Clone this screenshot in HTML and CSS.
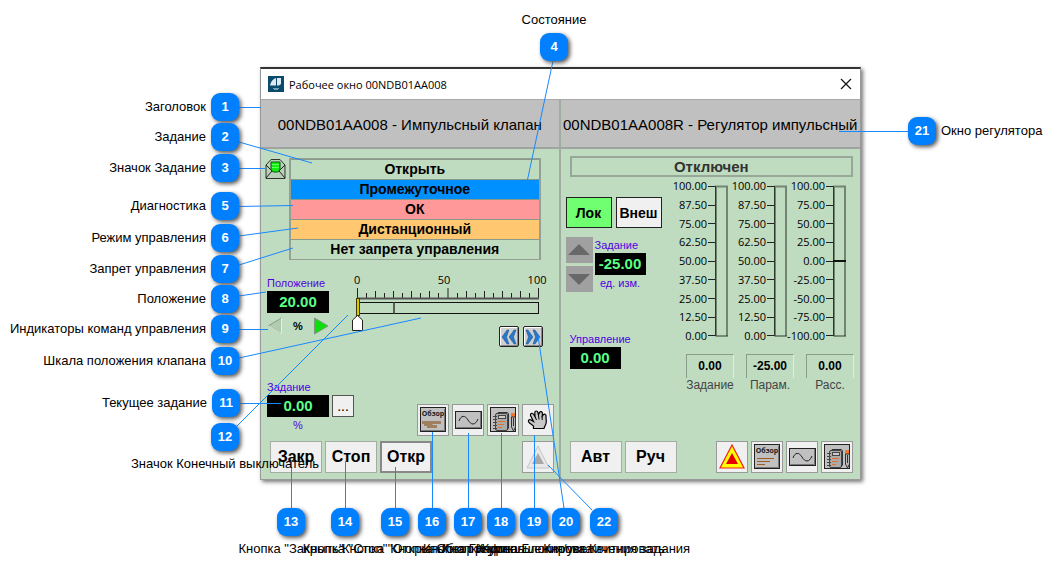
FILE: index.html
```html
<!DOCTYPE html>
<html lang="ru">
<head>
<meta charset="utf-8">
<title>Рабочее окно 00NDB01AA008</title>
<link rel="stylesheet" href="styles.css">
</head>
<body>
<svg class="defs" aria-hidden="true">
  <defs>
    <symbol id="i-overview" viewBox="0 0 28 28">
      <rect x="1.5" y="1.5" width="25" height="24" fill="#c0c0c0" stroke="#222"/>
      <path d="M2.500 24.500H25.500V3" fill="none" stroke="#777"/>
      <path d="M4 15.500H21M4 18.500H17M4 21.500H12" stroke="#a05a20"/>
      <text x="14" y="10" text-anchor="middle" class="icon-text">Обзор</text>
    </symbol>
    <symbol id="i-overview-hover" viewBox="0 0 28 28">
      <rect x="1.500" y="1.500" width="25" height="24" fill="#c0c0c0" stroke="#222"/>
      <path d="M2.500 24.500H25.500V3" fill="none" stroke="#777"/>
      <path d="M3 15H22V18H14L13 19H18V22H8V20H5V18H3Z" fill="#a08060"/>
      <text x="14" y="10" text-anchor="middle" class="icon-text">Обзор</text>
    </symbol>
    <symbol id="i-trend" viewBox="0 0 28 28">
      <rect x="1.500" y="5.500" width="26" height="17" fill="#c0c0c0" stroke="#222"/>
      <path d="M2.500 21.500H26.500V6" fill="none" stroke="#777"/>
      <path d="M5 15C7 9 11 9 14 14S21 20 24 13" fill="none" stroke="#222"/>
    </symbol>
    <symbol id="i-journal" viewBox="0 0 28 28">
      <rect x="1.500" y="1.500" width="25" height="24" fill="#c0c0c0" stroke="#222"/>
      <rect x="6.500" y="7.500" width="12" height="17" rx="1.500" fill="#aaa" stroke="#444"/>
      <path d="M8 7.500L9 6.500H18.500L19.500 8V22L18 24" fill="none" stroke="#333"/>
      <rect x="9.500" y="9.500" width="7" height="3" fill="#ccc" stroke="#444"/>
      <path d="M9 15.500H16M9 18.500H15M9 21.500H13" stroke="#e07030"/>
      <path d="M4 10.500H8M4 13.500H8M4 16.500H8M4 19.500H8M4 22.500H8" stroke="#444"/>
      <path d="M22 8H26M22 10H26" stroke="#f07828" stroke-width="2"/>
      <path d="M22.500 11V21L24.500 25L26.500 21V11ZM24.500 12V20" fill="#bbb" stroke="#333"/>
    </symbol>
    <symbol id="i-hand" viewBox="0 0 28 28">
      <path d="M9.500 22.500V20L5 16.500C3.500 14.500 5 13 7 14L9.500 15.500L6.500 9.500C6 7 8.500 6.500 9.700 8.500L11 10.500L10.800 6.500C11 4.500 13.500 4.500 13.900 6.500L14.500 9L15.500 6.500C16.500 4.800 18.500 5.500 18.400 7.500L18.200 10L19.500 8.500C21 7.500 22.500 9 22 11L22.300 16C22 19 20.500 20 20 22.500Z" fill="#c8c8c8" stroke="#000" stroke-width="1.200"/>
      <path d="M11 10.500L12.500 14M14.500 9L15 13.500M18.200 10V14" stroke="#000" fill="none"/>
    </symbol>
    <symbol id="i-alarm" viewBox="0 0 28 28">
      <path d="M14 2L26 25H2Z" fill="#ff0" stroke="#f02020" stroke-width="1.200"/>
      <path d="M14 10L20 21H8Z" fill="#e80000"/>
    </symbol>
    <symbol id="i-alarm-off" viewBox="0 0 28 28">
      <path d="M14 3L25 25H3Z" fill="#e8e8e8" stroke="#c4c4c4"/>
      <path d="M14 10L20 21H8Z" fill="#a8a8a8"/>
    </symbol>
    <symbol id="i-back" viewBox="0 0 16 16">
      <path d="M1 8L6 1H8L5.500 8L8 15H6ZM8 8L13 1H15L12.500 8L15 15H13Z" fill="#2878c8" stroke="#185090" stroke-width=".5"/>
    </symbol>
    <symbol id="i-meter" viewBox="0 0 22 158">
      <path d="M0 4.500H7M0 23.500H7M0 41.500H7M0 60.500H7M0 79.500H7M0 97.500H7M0 116.500H7M0 135.500H7M0 153.500H7" stroke="#222"/>
      <path d="M8 4V154M7 4.500H20M19 4V154" fill="none" stroke="#728572" stroke-width="2"/>
      <path d="M7.500 4V154H20" fill="none" stroke="#2d3a2d"/>
    </symbol>
  </defs>
</svg>
<main class="figure">
  <section class="window">
    <header class="titlebar">
      <svg class="logo" viewBox="0 0 16 16" aria-hidden="true"><rect width="16" height="16" fill="#0b4a6c"/><path d="M2 9.500C3 5 5 3 8 2V9.500ZM9 2H13V8L11 9.500H9Z" fill="#dceaf0"/><path d="M5 12.500H11M6 13.500H10" stroke="#6fa0b5"/></svg>
      <h1 class="titlebar-text">Рабочее окно 00NDB01AA008</h1>
      <button class="close" aria-label="Закрыть окно"><svg viewBox="0 0 12 12"><path d="M1 1L11 11M11 1L1 11" stroke="#111" stroke-width="1.200"/></svg></button>
    </header>
    <div class="panels">
      <section class="panel">
        <h2 class="panel-title">00NDB01AA008 - Импульсный клапан</h2>
        <div class="panel-body">
          <div class="status-row">
            <svg class="envelope" viewBox="0 0 21 22" aria-hidden="true"><path d="M1 7L6 1.500H15L20 7V20.500H1Z" fill="#b8d0b8" stroke="#333"/><path d="M1 7L7 13L1 20M20 7L14 13L20 20M7 13H14" fill="none" stroke="#222"/><path d="M6 4H15V12L12.500 14H8.500L6 12Z" fill="#10f010" stroke="#085808"/><path d="M7 6.500H14M7 9.500H14" stroke="#60ff60"/></svg>
            <ul class="status">
              <li class="st">Открыть</li>
              <li class="st st-blue">Промежуточное</li>
              <li class="st st-red">ОК</li>
              <li class="st st-orange">Дистанционный</li>
              <li class="st">Нет запрета управления</li>
            </ul>
          </div>
          <div class="position-row">
            <div class="reading">
              <span class="caption">Положение</span>
              <output class="lcd">20.00</output>
              <div class="commands">
                <svg viewBox="0 0 16 18" aria-hidden="true"><path d="M1 9L14.500 1V17Z" fill="#b0ccb0" stroke="#8a9a8a"/><path d="M1 9L14.500 17V1" fill="none" stroke="#e4ece4"/></svg>
                <span class="percent">%</span>
                <svg viewBox="0 0 16 18" aria-hidden="true"><path d="M1.500 1L15 9L1.500 17Z" fill="#0be00b" stroke="#7d987d"/></svg>
              </div>
            </div>
            <div class="travel">
              <div class="travel-numbers"><span>0</span><span>50</span><span>100</span></div>
              <svg class="travel-scale" viewBox="0 0 190 46" aria-hidden="true">
                <path d="M15.500 7V12M24.500 5V12M33.500 7V12M42.500 5V12M51.500 7V12M60.500 5V12M69.500 7V12M78.500 5V12M87.500 7V12M106.500 7V12M115.500 5V12M124.500 7V12M133.500 5V12M142.500 7V12M151.500 5V12M160.500 7V12M169.500 5V12M178.500 7V12" stroke="#222"/>
                <path d="M6.500 2V12M97 2V12M187.500 2V12" stroke="#222"/>
                <path d="M6 12.500H188" stroke="#555" stroke-width="2"/>
                <rect x="8.500" y="16.500" width="179" height="11" fill="none" stroke="#111"/>
                <path d="M43 16V28" stroke="#333" stroke-width="1.500"/>
                <rect x="5.500" y="12.500" width="3" height="17" fill="#d8c800" stroke="#403c00"/>
                <path d="M1.500 34L6.500 29.500L11.500 34V44.500H1.500Z" fill="#fff" stroke="#222"/>
              </svg>
              <div class="steps">
                <button class="step" aria-label="Уменьшить"><svg viewBox="0 0 16 16"><use href="#i-back"/></svg></button>
                <button class="step" aria-label="Увеличить"><svg class="flip" viewBox="0 0 16 16"><use href="#i-back"/></svg></button>
              </div>
            </div>
          </div>
          <div class="setpoint-row">
            <div class="reading">
              <span class="caption">Задание</span>
              <output class="lcd">0.00</output>
              <span class="caption unit">%</span>
            </div>
            <button class="more" aria-label="Ввод задания">...</button>
            <div class="tools">
              <button class="tool" aria-label="Обзор"><svg viewBox="0 0 28 28"><use href="#i-overview-hover"/></svg></button>
              <button class="tool" aria-label="График"><svg viewBox="0 0 28 28"><use href="#i-trend"/></svg></button>
              <button class="tool" aria-label="Журнал"><svg viewBox="0 0 28 28"><use href="#i-journal"/></svg></button>
              <button class="tool" aria-label="Блокировка"><svg viewBox="0 0 28 28"><use href="#i-hand"/></svg></button>
            </div>
          </div>
          <div class="actions">
            <button class="action">Закр</button>
            <button class="action">Стоп</button>
            <button class="action action-active">Откр</button>
            <div class="tools"><button class="tool" aria-label="Квитировать"><svg viewBox="0 0 28 28"><use href="#i-alarm-off"/></svg></button></div>
          </div>
        </div>
      </section>
      <section class="panel panel-right">
        <h2 class="panel-title">00NDB01AA008R - Регулятор импульсный</h2>
        <div class="panel-body">
          <p class="mode">Отключен</p>
          <div class="regulator">
            <div class="control">
              <div class="source"><button class="src src-on">Лок</button><button class="src">Внеш</button></div>
              <div class="adjust">
                <div class="spin">
                  <button class="spin-btn" aria-label="Больше"><svg viewBox="0 0 26 26"><path d="M2 18L13 7L24 18Z" fill="#686868"/></svg></button>
                  <button class="spin-btn" aria-label="Меньше"><svg viewBox="0 0 26 26"><path d="M2 8L13 19L24 8Z" fill="#686868"/></svg></button>
                </div>
                <div class="reading reading-small">
                  <span class="caption">Задание</span>
                  <output class="lcd">-25.00</output>
                  <span class="caption unit">ед. изм.</span>
                </div>
              </div>
              <div class="reading reading-small reading-out">
                <span class="caption">Управление</span>
                <output class="lcd">0.00</output>
              </div>
            </div>
            <div class="meters">
              <div class="meter">
                <div class="marks"><span>100.00</span><span>87.50</span><span>75.00</span><span>62.50</span><span>50.00</span><span>37.50</span><span>25.00</span><span>12.50</span><span>0.00</span></div>
                <svg viewBox="0 0 22 158" aria-hidden="true"><use href="#i-meter"/></svg>
              </div>
              <div class="meter">
                <div class="marks"><span>100.00</span><span>87.50</span><span>75.00</span><span>62.50</span><span>50.00</span><span>37.50</span><span>25.00</span><span>12.50</span><span>0.00</span></div>
                <svg viewBox="0 0 22 158" aria-hidden="true"><use href="#i-meter"/></svg>
              </div>
              <div class="meter">
                <div class="marks"><span>100.00</span><span>75.00</span><span>50.00</span><span>25.00</span><span>0.00</span><span>-25.00</span><span>-50.00</span><span>-75.00</span><span>-100.00</span></div>
                <svg viewBox="0 0 22 158" aria-hidden="true"><use href="#i-meter"/><path d="M7 79H20" stroke="#111" stroke-width="2"/></svg>
              </div>
            </div>
          </div>
          <dl class="values">
            <div class="value"><dt>Задание</dt><dd>0.00</dd></div>
            <div class="value"><dt>Парам.</dt><dd>-25.00</dd></div>
            <div class="value"><dt>Расс.</dt><dd>0.00</dd></div>
          </dl>
          <div class="actions">
            <button class="action">Авт</button>
            <button class="action">Руч</button>
            <div class="tools">
              <button class="tool" aria-label="Тревога"><svg viewBox="0 0 28 28"><use href="#i-alarm"/></svg></button>
              <button class="tool" aria-label="Обзор"><svg viewBox="0 0 28 28"><use href="#i-overview"/></svg></button>
              <button class="tool" aria-label="График"><svg viewBox="0 0 28 28"><use href="#i-trend"/></svg></button>
              <button class="tool" aria-label="Журнал"><svg viewBox="0 0 28 28"><use href="#i-journal"/></svg></button>
            </div>
          </div>
        </div>
      </section>
    </div>
  </section>
  <svg class="leaders" width="1057" height="573" viewBox="0 0 1057 573" aria-hidden="true">
    <path d="M239 107.500H261M239 142L312 163M239 168.500H265M553 61L527 182M239 206.500L293 205.500M239 236L298 228M239 265L293 248M239 296L266 292M239 329.500H268M239 358L421 318M240 403.500H281M237 426L348 315M291.500 508V460M345.500 508V461M395.500 508V467M432.500 508V432M468.500 508V433M501.500 508V433M534.500 508V435M564 508L538 336M592 510L548 465M908 131.500H839"/>
  </svg>
  <ol class="callouts">
    <li class="callout side n1"><b>1</b><span>Заголовок</span></li>
    <li class="callout side n2"><b>2</b><span>Задание</span></li>
    <li class="callout side n3"><b>3</b><span>Значок Задание</span></li>
    <li class="callout above n4"><b>4</b><span>Состояние</span></li>
    <li class="callout side n5"><b>5</b><span>Диагностика</span></li>
    <li class="callout side n6"><b>6</b><span>Режим управления</span></li>
    <li class="callout side n7"><b>7</b><span>Запрет управления</span></li>
    <li class="callout side n8"><b>8</b><span>Положение</span></li>
    <li class="callout side n9"><b>9</b><span>Индикаторы команд управления</span></li>
    <li class="callout side n10"><b>10</b><span>Шкала положения клапана</span></li>
    <li class="callout side n11"><b>11</b><span>Текущее задание</span></li>
    <li class="callout below n12"><b>12</b><span>Значок Конечный выключатель</span></li>
    <li class="callout below n13"><b>13</b><span>Кнопка "Закрыть"</span></li>
    <li class="callout below n14"><b>14</b><span>Кнопка "Стоп"</span></li>
    <li class="callout below n15"><b>15</b><span>Кнопка "Открыть"</span></li>
    <li class="callout below n16"><b>16</b><span>Кнопка Обзор</span></li>
    <li class="callout below n17"><b>17</b><span>Кнопка График</span></li>
    <li class="callout below n18"><b>18</b><span>Журнал</span></li>
    <li class="callout below n19"><b>19</b><span>Кнопка Блокировка</span></li>
    <li class="callout below n20"><b>20</b><span>Кнопки уменьшения/увеличения задания</span></li>
    <li class="callout right n21"><b>21</b><span>Окно регулятора</span></li>
    <li class="callout below n22"><b>22</b><span>Кнопка Квитировать</span></li>
  </ol>
</main>
</body>
</html>
```
FILE: styles.css
```css
* { box-sizing: border-box; }
body { margin: 0; background: #fff; color: #000; font-family: "Liberation Sans", Arial, sans-serif; }
h1, h2, p, ul, ol, dl, dd { margin: 0; padding: 0; list-style: none; }
button { margin: 0; padding: 0; font: inherit; color: inherit; cursor: pointer; }
svg { display: block; }
.defs { position: absolute; width: 0; height: 0; }
.icon-text { font: bold 7px "Open Sans", sans-serif; fill: #222; }
.figure { position: relative; min-height: 100vh; padding: 67px 196px 92px 260px; }

/* Window */
.window { max-width: 602px; border: 1px solid #999; border-top: 2px solid #333; box-shadow: 2px 2px 4px #777; background: #c0dcc0; }
.titlebar { display: flex; align-items: center; gap: 5px; height: 30px; padding: 0 8px 0 7px; background: #fff; }
.logo { width: 16px; height: 16px; }
.titlebar-text { flex: 1; font: 11px "Open Sans", sans-serif; }
.close { border: 0; background: none; }
.close svg { width: 12px; height: 12px; }
.panels { display: grid; grid-template-columns: 298fr 302fr; }
.panel { display: flex; flex-direction: column; min-width: 0; }
.panel-right { border-left: 2px solid #a0aca0; }
.panel-title { height: 50px; line-height: 50px; background: #c0c0c0; border-top: 1px solid #a8a8a8; border-bottom: 2px solid #a0a4a0; font-size: 15px; font-weight: normal; text-align: center; white-space: nowrap; }
.panel-body { display: flex; flex-direction: column; padding: 9px 5px 6px 6px; flex: 1; }

/* Valve panel */
.status-row { display: flex; gap: 3px; padding-right: 13px; }
.envelope { width: 21px; height: 22px; margin-left: -2px; }
.status { flex: 1; border: 2px solid #94a094; border-top-width: 1px; border-bottom-width: 1px; }
.st { height: 20px; line-height: 18px; text-align: center; font-size: 14px; font-weight: bold; border-top: 1px solid #8b998b; }
.st-blue { background: #0090ff; }
.st-red { background: #ff9898; }
.st-orange { background: #ffc870; }
.position-row { display: flex; gap: 22px; margin-top: 15px; padding-right: 11px; }
.reading { display: flex; flex-direction: column; width: 62px; }
.caption { font-size: 11px; line-height: 16px; color: #5000e0; white-space: nowrap; }
.unit { text-align: center; }
.lcd { height: 22px; line-height: 22px; background: #000; color: #5cff86; font-size: 15px; font-weight: bold; text-align: center; }
.commands { display: flex; justify-content: space-between; align-items: center; padding-top: 4px; }
.commands svg { width: 16px; height: 18px; }
.percent { font-size: 11px; font-weight: bold; }
.travel { flex: 1; }
.travel-numbers { display: flex; justify-content: space-between; margin: -2px -4px 0 3px; font: 11px/13px "Open Sans", sans-serif; }
.travel-scale { width: 190px; height: 46px; }
.steps { display: flex; justify-content: flex-end; gap: 4px; margin-top: -6px; }
.step { width: 20px; height: 21px; padding: 1px; background: #d0d0d0; border: 1px solid #222; border-radius: 2px; box-shadow: inset 1px 1px #fff, inset -1px -1px #888; }
.step svg { width: 16px; height: 16px; }
.flip { transform: scaleX(-1); }
.setpoint-row { display: flex; align-items: flex-start; margin-top: 32px; }
.more { width: 22px; height: 22px; margin: 16px 0 0 3px; background: #f0f0f0; border: 1px solid #555; font-size: 14px; line-height: 14px; }
.tools { display: flex; gap: 3px; margin-left: auto; }
.setpoint-row .tools { margin-top: 25px; }
.tool { display: grid; place-items: center; width: 32px; height: 32px; background: #f0f0f0; border: 1px solid #999; }
.tool svg { width: 28px; height: 28px; }
.actions { display: flex; gap: 3px; margin-top: auto; padding: 5px 0 0 3px; }
.action { width: 52px; height: 32px; background: #f0f0f0; border: 1px solid #a4aca4; font-size: 16px; font-weight: bold; }
.action-active { border: 2px solid #888; }

/* Regulator panel */
.panel-right .panel-body { padding: 7px 7px 6px 5px; }
.mode { margin: 0 0 0 4px; height: 21px; line-height: 18px; border: 2px solid #98a898; color: #333; font-size: 15px; font-weight: bold; text-align: center; }
.regulator { display: flex; justify-content: space-between; padding-right: 5px; }
.control { padding-top: 20px; }
.source { display: flex; gap: 4px; }
.src { width: 46px; height: 31px; background: #f0f0f0; border: 1px solid #222; font-size: 14px; font-weight: bold; }
.src-on { background: #70ff70; }
.adjust { display: flex; gap: 2px; margin-top: 9px; }
.spin { display: flex; flex-direction: column; gap: 3px; }
.spin-btn { width: 27px; height: 26px; background: #a0a0a0; border: 0; }
.spin-btn svg { width: 26px; height: 26px; }
.reading-small { width: 51px; }
.reading-out { margin: 39px 0 0 4px; }
.meters { display: grid; grid-template-columns: repeat(3, 59px); }
.meter { display: flex; justify-content: flex-end; gap: 1px; height: 168px; }
.meter svg { flex: none; width: 22px; height: 158px; margin-top: 5px; }
.marks { display: flex; flex-direction: column; justify-content: space-between; align-items: flex-end; height: 166px; margin-top: 1px; font: 11px/16px "Open Sans", sans-serif; }
.values { display: flex; justify-content: flex-end; gap: 10px; margin: -15px -2px 0 0; }
.value { display: flex; flex-direction: column-reverse; width: 50px; text-align: center; }
.value dt { font-size: 12px; line-height: 15px; color: #444; white-space: nowrap; }
.value dd { height: 24px; line-height: 22px; margin: 0 1px; border: 1px solid #8a9c8a; border-right-color: #e4ece4; border-bottom: 0; font-size: 12px; font-weight: bold; }
.panel-right .actions { padding-left: 4px; }

/* Callouts over the window */
.leaders { position: absolute; left: 0; top: 0; pointer-events: none; fill: none; stroke: #1888ff; }
.callout { position: absolute; display: flex; align-items: center; width: 28px; font-size: 13px; line-height: 16px; white-space: nowrap; }
.callout b { flex: none; width: 28px; height: 28px; line-height: 28px; border-radius: 9px; background: #0080ff; color: #fff; text-align: center; box-shadow: 2px 2px 4px #555; }
.side { flex-direction: row-reverse; gap: 5px; left: 211px; }
.right { gap: 5px; }
.below { flex-direction: column; gap: 5px; top: 508px; }
.above { flex-direction: column-reverse; gap: 5px; }
.n1 { top: 93px; }
.n2 { top: 123px; }
.n3 { top: 154px; }
.n4 { left: 540px; top: 12px; }
.n5 { top: 192px; }
.n6 { top: 224px; }
.n7 { top: 255px; }
.n8 { top: 285px; }
.n9 { top: 315px; }
.n10 { top: 347px; }
.n11 { left: 212px; top: 389px; }
.n12 { left: 211px; top: 423px; }
.n13 { left: 277px; }
.n14 { left: 331px; }
.n15 { left: 381px; }
.n16 { left: 418px; }
.n17 { left: 454px; }
.n18 { left: 487px; }
.n19 { left: 520px; }
.n20 { left: 552px; }
.n21 { left: 908px; top: 117px; }
.n22 { left: 590px; }
```
